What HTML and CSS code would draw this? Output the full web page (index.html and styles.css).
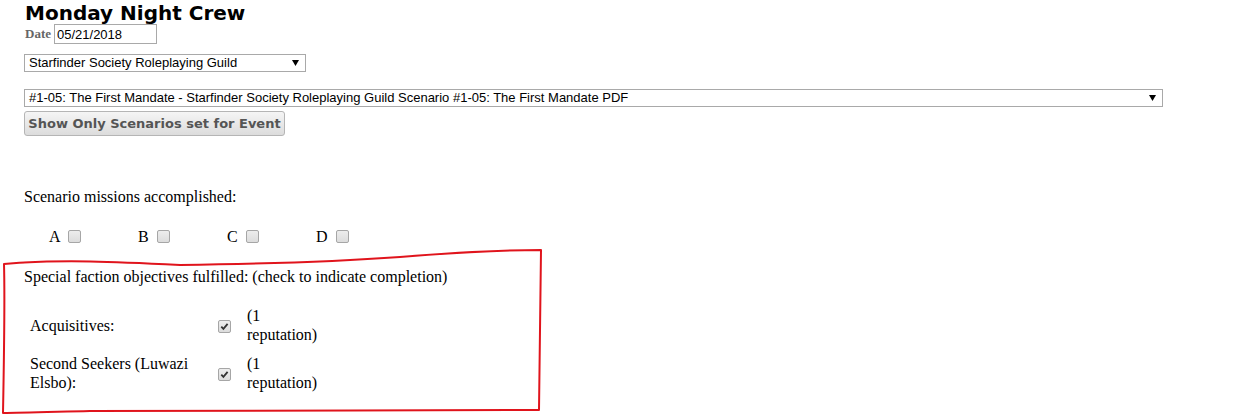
FILE: index.html
```html
<!DOCTYPE html>
<html>
<head>
<meta charset="utf-8">
<link rel="stylesheet" href="styles.css">
</head>
<body>
<div class="page">
  <h1 class="title">Monday Night Crew</h1>
  <div class="date-row">
    <label class="date-label" for="d">Date</label>
    <input id="d" class="date-input" type="text" value="05/21/2018">
  </div>
  <div class="select sel-guild">Starfinder Society Roleplaying Guild</div>
  <div class="select sel-scenario">#1-05: The First Mandate - Starfinder Society Roleplaying Guild Scenario #1-05: The First Mandate PDF</div>
  <button class="btn" type="button">Show Only Scenarios set for Event</button>

  <p class="missions-title">Scenario missions accomplished:</p>
  <div class="missions">
    <label class="mission">A <input class="cb" type="checkbox"></label>
    <label class="mission">B <input class="cb" type="checkbox"></label>
    <label class="mission">C <input class="cb" type="checkbox"></label>
    <label class="mission">D <input class="cb" type="checkbox"></label>
  </div>

  <p class="faction-title">Special faction objectives fulfilled: (check to indicate completion)</p>
  <table class="factions">
    <tr>
      <td class="fname">Acquisitives:</td>
      <td class="fcheck"><input class="cb" type="checkbox" checked></td>
      <td class="frep">(1 reputation)</td>
    </tr>
    <tr>
      <td class="fname">Second Seekers (Luwazi Elsbo):</td>
      <td class="fcheck"><input class="cb" type="checkbox" checked></td>
      <td class="frep">(1 reputation)</td>
    </tr>
  </table>
</div>
<svg class="annotation" width="1240" height="418" viewBox="0 0 1240 418">
  <path d="M4 264 C 60 259, 120 262, 180 265 C 260 264, 330 262, 400 257 C 460 252, 510 250, 541 250 L 539 410 C 400 411, 200 410, 90 411 C 50 412, 20 413, 3 413 C 4 360, 5 300, 4 264 Z" fill="none" stroke="#e0141c" stroke-width="2" stroke-linejoin="round"/>
</svg>
</body>
</html>
```
FILE: styles.css
```css
html, body {
  margin: 0;
  padding: 0;
  background: #fff;
}
body {
  font-family: "Liberation Serif", "Times New Roman", serif;
  font-size: 16px;
  color: #000;
  position: relative;
  width: 1240px;
  height: 418px;
  overflow: hidden;
}
.page {
  padding-left: 24px;
}
.title {
  font-family: "DejaVu Sans", Verdana, sans-serif;
  font-weight: bold;
  font-size: 20px;
  line-height: 21px;
  margin: 3px 0 0 1px;
  color: #000;
}
.date-row {
  display: flex;
  align-items: center;
  height: 20px;
  margin-top: 0;
}
.date-label {
  font-family: "Liberation Serif", serif;
  font-weight: bold;
  font-size: 13px;
  color: #666;
  margin-left: 1px;
  margin-right: 3px;
}
.date-input {
  box-sizing: border-box;
  width: 103px;
  height: 20px;
  margin: 0;
  padding: 0 2px;
  border: 1px solid #a9a9a9;
  font-family: "Liberation Sans", Arial, sans-serif;
  font-size: 13px;
  color: #000;
  outline: none;
}
.select {
  box-sizing: border-box;
  height: 18px;
  border: 1px solid #a9a9a9;
  background: #fff url("data:image/svg+xml,%3Csvg xmlns='http://www.w3.org/2000/svg' width='7' height='6'%3E%3Cpath d='M0 0 H7 L3.5 6 Z' fill='%23000'/%3E%3C/svg%3E") no-repeat right 6px center;
  font-family: "Liberation Sans", Arial, sans-serif;
  font-size: 13px;
  line-height: 16px;
  padding-left: 4px;
  color: #000;
  white-space: nowrap;
  overflow: hidden;
}
.sel-guild {
  width: 282px;
  margin-top: 10px;
}
.sel-scenario {
  width: 1139px;
  margin-top: 17px;
}
.btn {
  display: block;
  box-sizing: border-box;
  width: 261px;
  height: 25px;
  margin: 4px 0 0 0;
  padding: 0;
  border: 1px solid #b5b5b5;
  border-radius: 3px;
  background: linear-gradient(#f5f5f5, #dcdcdc);
  font-family: "DejaVu Sans", Verdana, sans-serif;
  font-weight: bold;
  font-size: 13px;
  color: #555;
  text-align: center;
}
.missions-title {
  margin: 52px 0 0 0;
  line-height: 18px;
}
.missions {
  display: flex;
  padding-left: 25px;
  margin-top: 22px;
  line-height: 18px;
}
.mission {
  width: 89px;
}
.cb {
  -webkit-appearance: none;
  appearance: none;
  box-sizing: border-box;
  width: 13px;
  height: 13px;
  margin: 0 0 0 4px;
  border: 1px solid #a6a6a6;
  border-radius: 2px;
  background: linear-gradient(#ededed, #dcdcdc);
  vertical-align: -1px;
}
.cb:checked {
  background: url("data:image/svg+xml,%3Csvg xmlns='http://www.w3.org/2000/svg' width='11' height='11'%3E%3Cpath d='M2.3 5.6 L4.4 7.8 L8.6 2.8' fill='none' stroke='%23333' stroke-width='1.8'/%3E%3C/svg%3E") no-repeat center, linear-gradient(#ededed, #dcdcdc);
}
.faction-title {
  margin: 22px 0 0 0;
  line-height: 18px;
}
.factions {
  margin-top: 14px;
  border-spacing: 2px;
  line-height: 19px;
}
.factions td {
  padding: 4px;
  vertical-align: middle;
}
.fname {
  width: 181px;
}
.fcheck {
  padding: 4px 0 4px 1px !important;
}
.fcheck .cb {
  margin: 0;
  vertical-align: middle;
}
.frep {
  width: 80px;
  padding-left: 14px !important;
}
.annotation {
  position: absolute;
  left: 0;
  top: 0;
  pointer-events: none;
}
```
